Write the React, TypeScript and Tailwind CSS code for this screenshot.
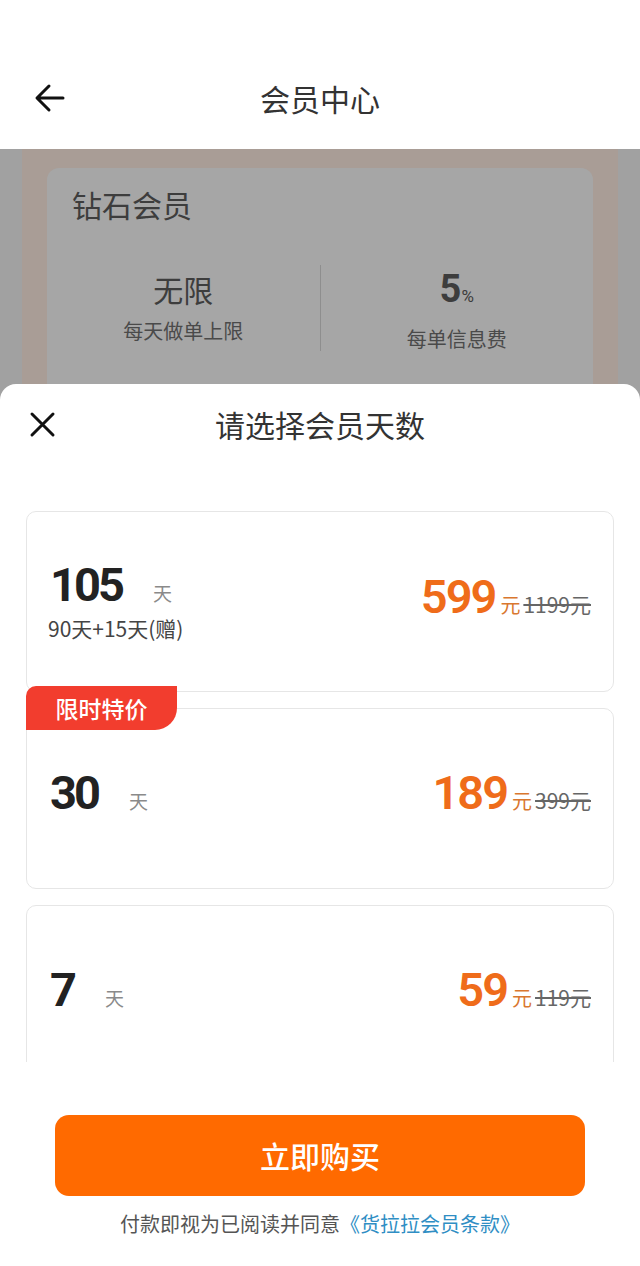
import React from "react";

const plans = [
  { days: "105", extra: "90天+15天(赠)", price: "599", old: "1199元", tag: false },
  { days: "30", extra: "", price: "189", old: "399元", tag: true },
  { days: "7", extra: "", price: "59", old: "119元", tag: false },
];

const cjk = "font-['Noto_Sans_CJK_SC','Noto_Sans',sans-serif]";
const num = "font-['Roboto','Noto_Sans_CJK_SC',sans-serif]";

function PlanCard({ plan }: { plan: (typeof plans)[number] }) {
  return (
    <div
      className={`relative h-[181px] shrink-0 rounded-[10px] border border-[#e6e6e6] bg-white pl-[23px] pr-[22px] flex items-center justify-between ${
        plan.extra ? "" : "pb-[12px]"
      }`}
    >
      {plan.tag && (
        <div className="absolute -left-px -top-[23px] h-[44px] w-[151px] rounded-tl-[10px] rounded-br-[22px] bg-[#f23d2e] flex items-center justify-center text-[23px] text-white font-medium">
          限时特价
        </div>
      )}
      <div className="flex flex-col">
        <div className="flex items-baseline">
          <span className={`${num} text-[47px] font-bold leading-none tracking-[-3px] text-[#222]`}>
            {plan.days}
          </span>
          <span className="ml-[31px] text-[19px] text-[#8a8a8a]">天</span>
        </div>
        {plan.extra && (
          <span className="mt-[6px] -ml-[2px] text-[21px] leading-[28px] text-[#444]">{plan.extra}</span>
        )}
      </div>
      <div className={`flex items-baseline ${plan.extra ? "mb-[10px]" : ""}`}>
        <span className={`${num} text-[47px] font-semibold leading-none tracking-[-2px] text-[#ef6c1a]`}>
          {plan.price}
        </span>
        <span className="ml-[5px] text-[20px] text-[#d9772f]">元</span>
        <span className="ml-[3px] text-[21px] text-[#666] line-through">{plan.old}</span>
      </div>
    </div>
  );
}

export default function App() {
  return (
    <div className={`relative w-[640px] h-[1266px] overflow-hidden bg-white ${cjk}`}>
      {/* Header */}
      <div className="h-[149px] pt-[74px] px-[30px]">
        <div className="relative h-[48px] flex items-center justify-center">
          <svg className="absolute left-[4px]" width="32" height="32" viewBox="0 0 32 32" fill="none">
            <path d="M29 16H4M15 4L3 16l12 12" stroke="#111" strokeWidth="3" strokeLinecap="round" strokeLinejoin="round" />
          </svg>
          <span className="text-[30px] text-[#333]">会员中心</span>
        </div>
      </div>

      {/* Dimmed background page */}
      <div className="h-[1117px] bg-[#a1a1a1]">
        <div className="mx-[22px] h-full bg-[#a99d96] px-[25px] pt-[19px]">
          <div className="h-[400px] rounded-[12px] bg-[#a6a6a6] px-[25px] pt-[16px]">
            <div className="text-[30px] leading-[40px] text-[#3d3d3d]">钻石会员</div>
            <div className="mt-[45px] flex -mx-[25px]">
              <div className="flex-1 flex flex-col items-center">
                <span className="text-[30px] leading-[40px] text-[#3d3d3d]">无限</span>
                <span className="mt-[8px] text-[20px] leading-[28px] text-[#4a4a4a]">每天做单上限</span>
              </div>
              <div className="w-px h-[86px] -mt-[4px] bg-[#8e8e8e]" />
              <div className="flex-1 flex flex-col items-center">
                <span className={`${num} leading-[40px] text-[#3d3d3d]`}>
                  <span className="text-[38px] font-bold">5</span>
                  <span className="text-[17px]">%</span>
                </span>
                <span className="mt-[8px] text-[20px] leading-[28px] text-[#4a4a4a]">每单信息费</span>
              </div>
            </div>
          </div>
        </div>
      </div>

      {/* Bottom sheet */}
      <div className="absolute left-0 right-0 top-[384px] bottom-0 rounded-t-[16px] bg-white flex flex-col">
        <div className="relative h-[80px] flex items-center justify-center">
          <svg className="absolute left-[29px]" width="27" height="27" viewBox="0 0 27 27" fill="none">
            <path d="M3 3l21 21M24 3L3 24" stroke="#111" strokeWidth="3" strokeLinecap="round" />
          </svg>
          <span className="text-[30px] text-[#333]">请选择会员天数</span>
        </div>

        <div className="mt-[47px] mx-[26px] h-[551px] overflow-hidden flex flex-col gap-[16px]">
          {plans.map((p) => (
            <PlanCard key={p.days} plan={p} />
          ))}
        </div>

        <div className="flex-1 flex flex-col items-center pt-[53px]">
          <button className="w-[530px] h-[81px] rounded-[14px] bg-[#ff6a00] text-white text-[30px] font-medium">
            立即购买
          </button>
          <p className="mt-[13px] text-[20px] leading-[30px] text-[#555]">
            付款即视为已阅读并同意<span className="text-[#2f8ec4]">《货拉拉会员条款》</span>
          </p>
        </div>
      </div>
    </div>
  );
}
